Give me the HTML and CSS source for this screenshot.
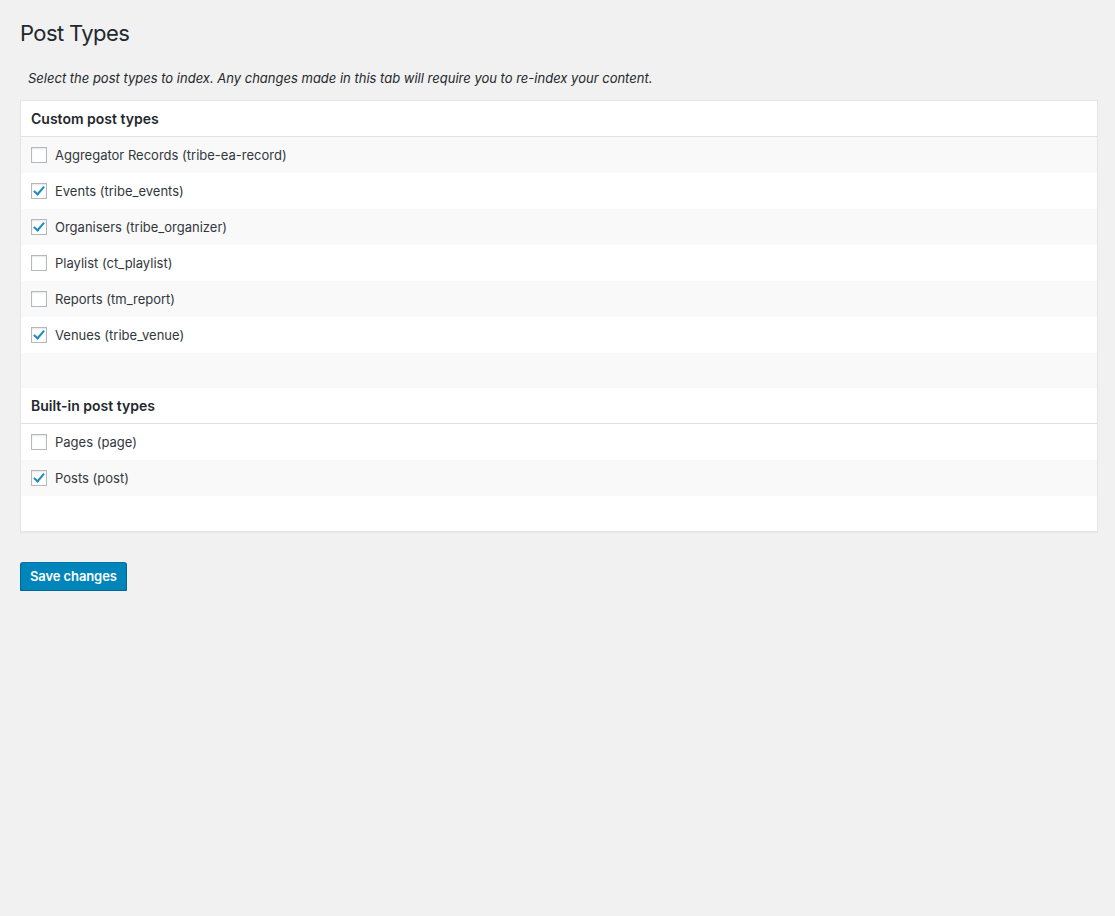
FILE: index.html
```html
<!DOCTYPE html>
<html lang="en">
<head>
    <meta charset="UTF-8">
    <meta name="viewport" content="width=device-width, initial-scale=1.0">
    <title>Post Types</title>
    <link rel="stylesheet" href="styles.css">
</head>
<body>
    <div class="wrap">
        <h1 class="page-title">Post Types</h1>
        <p class="description">Select the post types to index. Any changes made in this tab will require you to re-index your content.</p>

        <div class="types-box">
            <div class="types-head">Custom post types</div>
            <label class="type-row alt"><input type="checkbox"> Aggregator Records (tribe-ea-record)</label>
            <label class="type-row"><input type="checkbox" checked> Events (tribe_events)</label>
            <label class="type-row alt"><input type="checkbox" checked> Organisers (tribe_organizer)</label>
            <label class="type-row"><input type="checkbox"> Playlist (ct_playlist)</label>
            <label class="type-row alt"><input type="checkbox"> Reports (tm_report)</label>
            <label class="type-row"><input type="checkbox" checked> Venues (tribe_venue)</label>
            <div class="type-row alt spacer"></div>

            <div class="types-head">Built-in post types</div>
            <label class="type-row"><input type="checkbox"> Pages (page)</label>
            <label class="type-row alt"><input type="checkbox" checked> Posts (post)</label>
            <div class="type-row spacer"></div>
        </div>

        <p class="submit">
            <button class="button-primary">Save changes</button>
        </p>
    </div>
</body>
</html>
```

FILE: styles.css
```css
body {
    margin: 0;
    background: #f1f1f1;
    color: #444;
    font-family: Inter, "Liberation Sans", Arial, sans-serif;
    font-size: 13px;
}
.wrap {
    padding: 0 17px 0 20px;
}
.page-title {
    margin: 0;
    padding: 20px 0 0;
    font-size: 22px;
    font-weight: 400;
    line-height: 27px;
    color: #23282d;
    letter-spacing: -0.6px;
}
.description {
    margin: 22px 0 13px 8px;
    font-style: italic;
    font-size: 13px;
    line-height: 18px;
    color: #23282d;
}
.types-box {
    background: #fff;
    border: 1px solid #e5e5e5;
    box-shadow: 0 1px 1px rgba(0, 0, 0, 0.04);
}
.types-head {
    height: 35px;
    line-height: 35px;
    padding: 0 10px;
    font-size: 14px;
    font-weight: 600;
    color: #23282d;
    border-bottom: 1px solid #e1e1e1;
}
.type-row {
    display: flex;
    align-items: center;
    height: 36px;
    padding: 0 10px;
    color: #32373c;
    cursor: pointer;
}
.type-row.alt {
    background: #f9f9f9;
}
.type-row.spacer {
    height: 35px;
}
.type-row input {
    -webkit-appearance: none;
    appearance: none;
    width: 16px;
    height: 16px;
    margin: 0 8px 0 0;
    border: 1px solid #b4b9be;
    background: #fff;
    box-shadow: inset 0 1px 2px rgba(0, 0, 0, 0.1);
    box-sizing: border-box;
    position: relative;
}
.type-row input:checked::after {
    content: "";
    position: absolute;
    left: 4px;
    top: 0;
    width: 4px;
    height: 9px;
    border: solid #1e8cbe;
    border-width: 0 2.5px 2.5px 0;
    transform: rotate(40deg);
}
.submit {
    margin: 30px 0 0;
}
.button-primary {
    height: 29px;
    padding: 0 9px 1px;
    background: #0085ba;
    border: 1px solid;
    border-color: #0073aa #006799 #006799;
    border-radius: 3px;
    box-shadow: 0 1px 0 #006799;
    color: #fff;
    font-family: inherit;
    font-size: 13px;
    font-weight: 600;
    letter-spacing: -0.1px;
    cursor: pointer;
}
.button-primary:hover {
    background: #008ec2;
}
```
